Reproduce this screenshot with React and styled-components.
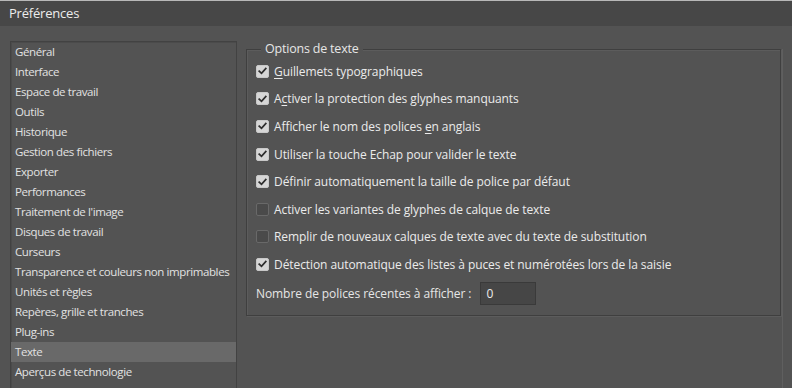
import React from "react";
import styled, { createGlobalStyle } from "styled-components";

const Global = createGlobalStyle`
  html, body { margin: 0; padding: 0; background: #535353; }
  body { font-family: "Open Sans", "Noto Sans", sans-serif; }
  * { box-sizing: border-box; }
`;

const Window = styled.div`
  width: 792px;
  height: 388px;
  overflow: hidden;
  display: flex;
  flex-direction: column;
  background: #535353;
`;

const TitleBar = styled.div`
  height: 26px;
  flex: none;
  background: #474747;
  border-top: 1px solid #b8b8b8;
  display: flex;
  align-items: center;
  padding-left: 9px;
  padding-bottom: 1px;
  color: #ececec;
  font-size: 13px;
  letter-spacing: -0.2px;
`;

const Body = styled.div`
  flex: 1;
  display: flex;
  align-items: flex-start;
  padding: 15px 0 0 10px;
  min-height: 0;
`;

const List = styled.ul`
  list-style: none;
  margin: 0;
  padding: 0;
  width: 227px;
  height: 400px;
  flex: none;
  overflow: hidden;
  border: 1px solid #424242;
  box-shadow: inset 1px 1px 0 #4b4b4b;
`;

const Item = styled.li`
  height: 20px;
  display: flex;
  align-items: center;
  padding: 0 0 2px 4px;
  color: #e2e2e2;
  font-size: 11.5px;
  letter-spacing: -0.4px;
  white-space: nowrap;
  background: ${(p) => (p.$selected ? "#696969" : "transparent")};
`;

const Group = styled.fieldset`
  margin: 8px 0 0 9px;
  width: 535px;
  height: 267px;
  flex: none;
  border: 1px solid #3f3f3f;
  box-shadow: inset 1px 1px 0 #5c5c5c, 1px 1px 0 #5c5c5c;
  padding: 0 0 0 9px;
  position: relative;
  display: flex;
  flex-direction: column;
`;

const Legend = styled.legend`
  position: absolute;
  top: -9px;
  left: 14px;
  padding: 0 4px;
  background: #535353;
  color: #e6e6e6;
  font-size: 12.5px;
  line-height: 16px;
  letter-spacing: -0.2px;
`;

const Options = styled.div`
  padding-top: 7.5px;
  display: flex;
  flex-direction: column;
`;

const Row = styled.label`
  height: 27.6px;
  display: flex;
  align-items: center;
  gap: 5px;
  color: #ebebeb;
  font-size: 12px;
  letter-spacing: -0.08px;
  white-space: nowrap;
`;

const Box = styled.span`
  width: 13px;
  height: 13px;
  flex: none;
  border-radius: 2px;
  display: flex;
  align-items: center;
  justify-content: center;
  background: ${(p) => (p.$checked ? "#d6d6d6" : "#4a4a4a")};
  border: 1px solid ${(p) => (p.$checked ? "#c8c8c8" : "#696969")};
`;

const U = styled.span`
  text-decoration: underline;
  text-underline-offset: 2px;
`;

const NumberRow = styled.div`
  margin-top: 3.5px;
  height: 23px;
  display: flex;
  align-items: center;
  gap: 9px;
  color: #e6e6e6;
  font-size: 12px;
  letter-spacing: -0.08px;
  white-space: nowrap;
`;

const Input = styled.div`
  width: 56px;
  height: 23px;
  background: #464646;
  border: 1px solid #3a3a3a;
  display: flex;
  align-items: center;
  padding-left: 5px;
  color: #ececec;
  font-size: 12px;
`;

const EdgePanel = styled.div`
  margin: 8px 0 0 1px;
  width: 12px;
  height: 340px;
  flex: none;
  border-left: 1px solid #5f5f5f;
`;

const Check = () => (
  <svg width="9" height="8" viewBox="0 0 9 8">
    <path d="M1.2 4.2 L3.5 6.3 L7.8 1.6" fill="none" stroke="#2e2e2e" strokeWidth="1.8" strokeLinecap="square" />
  </svg>
);

const items = [
  "Général",
  "Interface",
  "Espace de travail",
  "Outils",
  "Historique",
  "Gestion des fichiers",
  "Exporter",
  "Performances",
  "Traitement de l'image",
  "Disques de travail",
  "Curseurs",
  "Transparence et couleurs non imprimables",
  "Unités et règles",
  "Repères, grille et tranches",
  "Plug-ins",
  "Texte",
  "Aperçus de technologie",
];

const options = [
  { checked: true, label: <><U>G</U>uillemets typographiques</> },
  { checked: true, label: <>A<U>c</U>tiver la protection des glyphes manquants</> },
  { checked: true, label: <>Afficher le nom des polices <U>e</U>n anglais</> },
  { checked: true, label: <>Utiliser la touche Echap pour valider le texte</> },
  { checked: true, label: <>Définir automatiquement la taille de police par défaut</> },
  { checked: false, label: <>Activer les variantes de glyphes de calque de texte</> },
  { checked: false, label: <>Remplir de nouveaux calques de texte avec du texte de substitution</> },
  { checked: true, label: <>Détection automatique des listes à puces et numérotées lors de la saisie</> },
];

export default function App() {
  return (
    <>
      <Global />
      <Window>
        <TitleBar>Préférences</TitleBar>
        <Body>
          <List>
            {items.map((t) => (
              <Item key={t} $selected={t === "Texte"}>{t}</Item>
            ))}
          </List>
          <Group>
            <Legend>Options de texte</Legend>
            <Options>
              {options.map((o, i) => (
                <Row key={i}>
                  <Box $checked={o.checked}>{o.checked && <Check />}</Box>
                  <span>{o.label}</span>
                </Row>
              ))}
            </Options>
            <NumberRow>
              Nombre de polices récentes à afficher :
              <Input>0</Input>
            </NumberRow>
          </Group>
          <EdgePanel />
        </Body>
      </Window>
    </>
  );
}
